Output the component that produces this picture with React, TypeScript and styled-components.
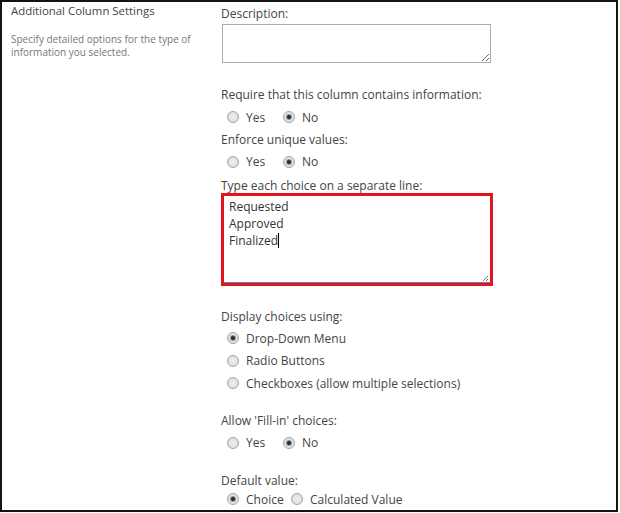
import React from "react";
import styled, { createGlobalStyle } from "styled-components";

const Global = createGlobalStyle`
  html, body { margin: 0; padding: 0; background: #fff; }
  body { font-family: "Open Sans", "Noto Sans", sans-serif; }
`;

const Frame = styled.div`
  box-sizing: border-box;
  width: 618px;
  height: 512px;
  border: 2px solid #141414;
  display: flex;
  overflow: hidden;
  background: #fff;
`;

const Side = styled.div`
  width: 209px;
  flex: none;
  padding: 1px 0 0 9px;
  box-sizing: border-box;
`;

const SideTitle = styled.div`
  font-size: 11.4px;
  line-height: 16px;
  color: #444;
`;

const SideText = styled.div`
  margin-top: 14px;
  font-size: 10px;
  line-height: 13px;
  color: #777;
  width: 190px;
`;

const Main = styled.div`
  display: flex;
  flex-direction: column;
  padding: 3px 0 0 10px;
`;

const Label = styled.div<{ $mt?: number; $h?: number }>`
  margin-top: ${(p) => p.$mt ?? 0}px;
  font-size: 12px;
  line-height: 18px;
  height: ${(p) => p.$h ?? 18}px;
  color: #444;
  white-space: nowrap;
`;

const Area = styled.textarea`
  box-sizing: border-box;
  margin: 1px 0 0 1px;
  width: 269px;
  height: 40px;
  border: 1px solid #ababab;
  padding: 3px;
  font-family: inherit;
  font-size: 12px;
  outline: none;
`;

const ChoiceBox = styled.div`
  position: relative;
  box-sizing: border-box;
  width: 272px;
  height: 95px;
  border: 3px solid #e3131f;
  padding: 2px 5px;
  font-size: 12px;
  line-height: 17px;
  color: #333;
  background: #fff;
  box-shadow: inset 0 -1px 0 #6a7ea8;
`;

const Caret = styled.span`
  display: inline-block;
  width: 1px;
  height: 15px;
  background: #000;
  vertical-align: -3px;
`;

const Grip = styled.svg`
  position: absolute;
  right: 1px;
  bottom: 1px;
`;

const Row = styled.div<{ $mt?: number }>`
  margin-top: ${(p) => p.$mt ?? 0}px;
  height: 22px;
  display: flex;
  align-items: center;
  padding-left: 6px;
`;

const Option = styled.label<{ $w?: number }>`
  display: flex;
  align-items: center;
  gap: 7px;
  font-size: 12px;
  color: #444;
  width: ${(p) => (p.$w ? `${p.$w}px` : "auto")};
  white-space: nowrap;
`;

const Radio = styled.span<{ $on?: boolean }>`
  box-sizing: border-box;
  width: 12px;
  height: 12px;
  border-radius: 50%;
  border: 1px solid #a5a5a5;
  background: radial-gradient(circle at 50% 50%, #f3f0e4 0%, #dde4ec 55%, #c6d0dc 100%);
  display: flex;
  align-items: center;
  justify-content: center;
  flex: none;
  &::after {
    content: "";
    display: ${(p) => (p.$on ? "block" : "none")};
    width: 4px;
    height: 4px;
    border-radius: 50%;
    background: #2b2b2b;
    box-shadow: 0 0 0 1px #9a8f84;
  }
`;

const Opt = ({ on, label, w }: { on?: boolean; label: string; w?: number }) => (
  <Option $w={w}>
    <Radio $on={on} />
    {label}
  </Option>
);

export default function App() {
  return (
    <>
      <Global />
      <Frame>
        <Side>
          <SideTitle>Additional Column Settings</SideTitle>
          <SideText>Specify detailed options for the type of information you selected.</SideText>
        </Side>
        <Main>
          <Label>Description:</Label>
          <Area />
          <Label $mt={23}>Require that this column contains information:</Label>
          <Row $mt={2}>
            <Opt label="Yes" w={56} />
            <Opt label="No" on />
          </Row>
          <Label $mt={3}>Enforce unique values:</Label>
          <Row $mt={2}>
            <Opt label="Yes" w={56} />
            <Opt label="No" on />
          </Row>
          <Label $mt={5} $h={16}>Type each choice on a separate line:</Label>
          <ChoiceBox>
            <div>Requested</div>
            <div>Approved</div>
            <div>
              Finalized
              <Caret />
            </div>
            <Grip width="8" height="8" viewBox="0 0 8 8">
              <path d="M7 2 L2 7 M7 5 L5 7" stroke="#8a7f77" strokeWidth="1" />
            </Grip>
          </ChoiceBox>
          <Label $mt={22}>Display choices using:</Label>
          <Row $mt={1}>
            <Opt label="Drop-Down Menu" on />
          </Row>
          <Row $mt={1}>
            <Opt label="Radio Buttons" />
          </Row>
          <Row $mt={1}>
            <Opt label="Checkboxes (allow multiple selections)" />
          </Row>
          <Label $mt={18}>Allow 'Fill-in' choices:</Label>
          <Row $mt={2}>
            <Opt label="Yes" w={56} />
            <Opt label="No" on />
          </Row>
          <Label $mt={18}>Default value:</Label>
          <Row $mt={-1}>
            <Opt label="Choice" w={64} on />
            <Opt label="Calculated Value" />
          </Row>
        </Main>
      </Frame>
    </>
  );
}
